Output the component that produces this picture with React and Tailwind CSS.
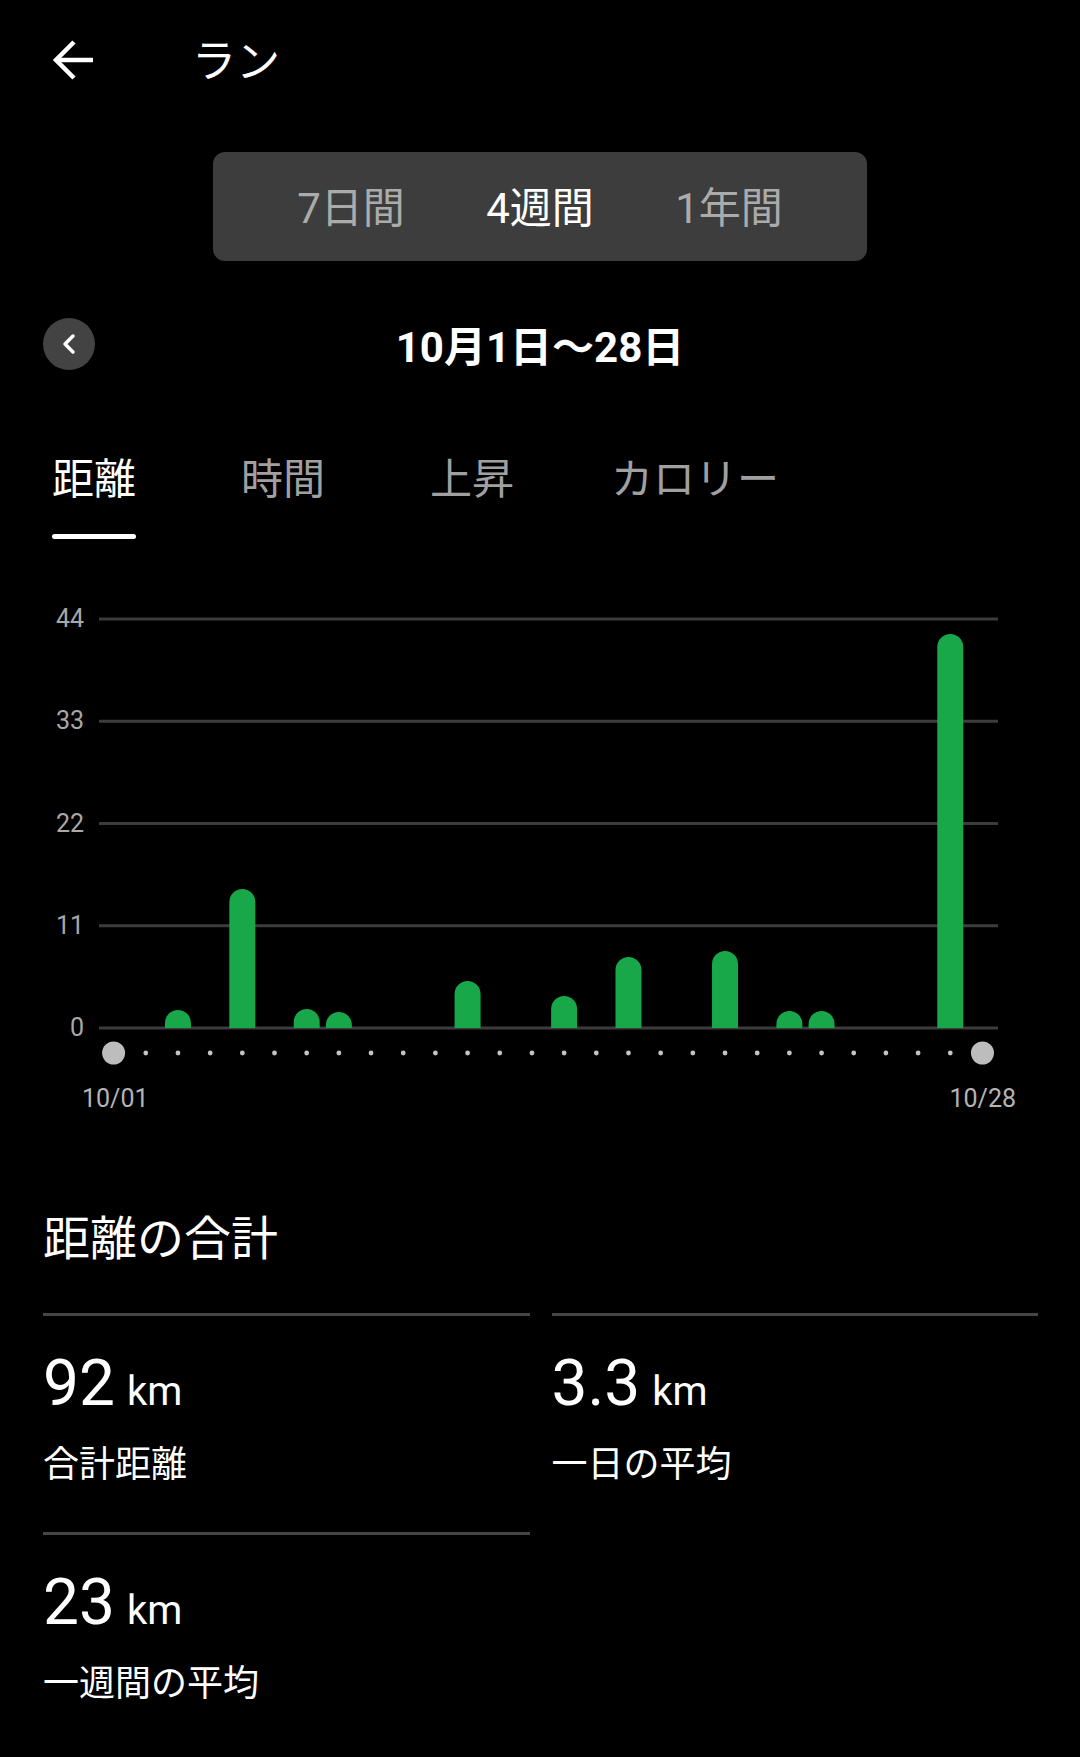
import React from "react";

const BARS = { 2: 18, 4: 139, 6: 19, 7: 16, 11: 47, 14: 32, 16: 71, 19: 77, 21: 17, 22: 17, 26: 394 };
const GRID = [19, 121.25, 223.5, 325.75, 428];
const BASE = 428;
const dx = (i) => 14.6 + i * 32.18;

function barPath(cx, h) {
  const r = 13;
  const top = BASE - h;
  if (h <= r) {
    return `M ${cx - r} ${BASE} A ${r} ${h} 0 0 1 ${cx + r} ${BASE} Z`;
  }
  return `M ${cx - r} ${BASE} L ${cx - r} ${top + r} A ${r} ${r} 0 0 1 ${cx + r} ${top + r} L ${cx + r} ${BASE} Z`;
}

function Chart() {
  return (
    <svg width="911" height="470" viewBox="0 0 911 470" className="block">
      {GRID.map((y) => (
        <line key={y} x1="0" x2="899" y1={y} y2={y} stroke="#3c3c3c" strokeWidth="3" />
      ))}
      {Object.entries(BARS).map(([i, h]) => (
        <path key={i} d={barPath(dx(Number(i)), h)} fill="#18a84a" />
      ))}
      {Array.from({ length: 28 }).map((_, i) =>
        i === 0 || i === 27 ? (
          <circle key={i} cx={dx(i)} cy="453" r="11.5" fill="#bdbdbd" />
        ) : (
          <circle key={i} cx={dx(i)} cy="453" r="2.4" fill="#c4c4c4" />
        )
      )}
    </svg>
  );
}

function Stat({ value, label }) {
  return (
    <div className="flex flex-col">
      <div className="h-[3px] bg-[#464646]" />
      <div className="mt-[36px] flex items-baseline gap-[12px] text-white">
        <span className="text-[64px] leading-[64px]">{value}</span>
        <span className="text-[40px] leading-[40px]">km</span>
      </div>
      <div className="mt-[31px] text-[36px] leading-none text-white">{label}</div>
    </div>
  );
}

export default function App() {
  return (
    <div className="w-[1080px] min-h-[1757px] bg-black font-['Roboto','Noto_Sans_CJK_JP',sans-serif] text-white">
      {/* header */}
      <div className="h-[120px] flex items-center pl-[52px]">
        <svg width="42" height="42" viewBox="0 0 42 42" fill="none" stroke="white" strokeWidth="4.5">
          <line x1="4" y1="21" x2="41" y2="21" />
          <polyline points="22,3 4,21 22,39" strokeLinejoin="miter" />
        </svg>
        <span className="ml-[98px] mt-[4px] text-[44px] leading-none">ラン</span>
      </div>

      {/* segmented control */}
      <div className="mt-[32px] mx-auto w-[654px] h-[109px] rounded-[12px] bg-[#3d3d3d] flex items-center justify-center pt-[4px]">
        <div className="w-[189px] text-center text-[42px] leading-none text-[#ababab]">7日間</div>
        <div className="w-[189px] text-center text-[42px] leading-none text-white">4週間</div>
        <div className="w-[189px] text-center text-[42px] leading-none text-[#ababab]">1年間</div>
      </div>

      {/* date row */}
      <div className="mt-[57px] h-[52px] px-[43px] grid grid-cols-[1fr_auto_1fr] items-center">
        <div className="w-[52px] h-[52px] rounded-full bg-[#434343] flex items-center justify-center">
          <svg width="16" height="22" viewBox="0 0 16 22" fill="none" stroke="white" strokeWidth="3.5" strokeLinecap="round" strokeLinejoin="round">
            <polyline points="12,3 4,11 12,19" />
          </svg>
        </div>
        <div className="mt-[8px] text-[42px] font-bold leading-none">10月1日〜28日</div>
        <div />
      </div>

      {/* tabs */}
      <div className="mt-[89px] flex pl-[52px]">
        <div className="flex flex-col">
          <div className="text-[42px] leading-none text-white">距離</div>
          <div className="mt-[33px] h-[5px] rounded-full bg-white" />
        </div>
        <div className="ml-[105px] text-[42px] leading-none text-[#a0a0a0]">時間</div>
        <div className="ml-[105px] text-[42px] leading-none text-[#a0a0a0]">上昇</div>
        <div className="ml-[97px] text-[42px] leading-none text-[#a0a0a0]">カロリー</div>
      </div>

      {/* chart */}
      <div className="mt-[61px] grid grid-cols-[99px_911px]">
        <div className="flex flex-col items-end pr-[15px] pt-[4px] gap-[72.25px] text-[25px] leading-[30px] text-[#a8a8a8]">
          <div className="h-[30px]">44</div>
          <div className="h-[30px]">33</div>
          <div className="h-[30px]">22</div>
          <div className="h-[30px]">11</div>
          <div className="h-[30px]">0</div>
        </div>
        <Chart />
      </div>
      <div className="mt-[14px] flex justify-between pl-[82px] pr-[64px] text-[25px] leading-[30px] text-[#b4b4b4]">
        <span>10/01</span>
        <span>10/28</span>
      </div>

      {/* totals */}
      <div className="mt-[101px] pl-[43px] text-[47px] leading-none text-white">距離の合計</div>
      <div className="mt-[51px] pl-[43px] pr-[42px] grid grid-cols-2 gap-x-[22px] gap-y-[49px]">
        <Stat value="92" label="合計距離" />
        <Stat value="3.3" label="一日の平均" />
        <Stat value="23" label="一週間の平均" />
      </div>
    </div>
  );
}
